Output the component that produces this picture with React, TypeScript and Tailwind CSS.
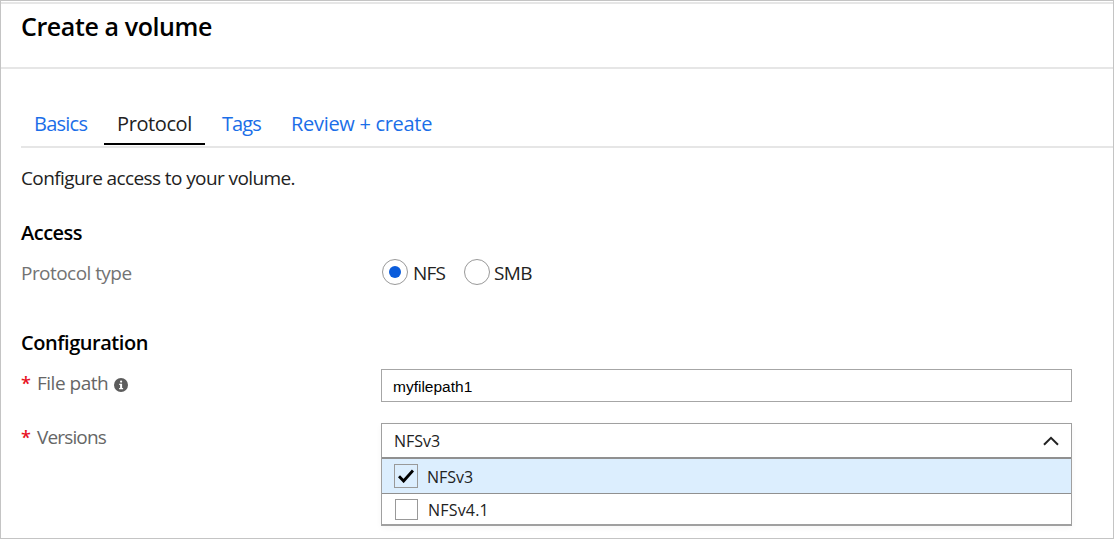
import React, { useState } from "react";

const tabs = [
  { name: "Basics", box: "w-[83px] pl-[13px]", text: "tracking-[-0.75px]" },
  { name: "Protocol", box: "w-[101px] pl-[13px]", text: "tracking-[-0.4px]" },
  { name: "Tags", box: "w-[70px] pl-[17px]", text: "tracking-[-0.9px]" },
  { name: "Review + create", box: "pl-[16px]", text: "tracking-[-0.3px]" },
];

function Radio({ checked, onSelect }: { checked: boolean; onSelect: () => void }) {
  return (
    <button
      type="button"
      role="radio"
      aria-checked={checked}
      onClick={onSelect}
      className="flex size-[26px] shrink-0 items-center justify-center rounded-full border-[1.5px] border-[#999] bg-white"
    >
      {checked && <span className="size-[12px] rounded-full bg-[#0a5cdb]" />}
    </button>
  );
}

function InfoIcon() {
  return (
    <svg viewBox="0 0 14 14" className="ml-[6px] size-[14px]">
      <circle cx="7" cy="7" r="7" fill="#5c5c5c" />
      <path d="M5.2 5.8h2.9v4.3h1v1.1H5.1v-1.1h1V6.9h-.9z" fill="#fff" />
      <circle cx="7.1" cy="3.6" r="1.1" fill="#fff" />
    </svg>
  );
}

function Required() {
  return <span className="w-[16px] text-[18px] font-semibold text-[#e81123]">*</span>;
}

export default function App() {
  const [tab, setTab] = useState("Protocol");
  const [protocol, setProtocol] = useState("NFS");

  return (
    <div className="h-[539px] w-[1114px] overflow-hidden border border-[#c4c4c4] bg-white font-['Open_Sans','Noto_Sans',sans-serif] text-[19px] leading-[28px] whitespace-nowrap text-[#222]">
      <header className="mt-px h-[67px] border-t-2 border-b-2 border-t-[#e6e6e6] border-b-[#e6e6e6] pt-[6px] pl-[20px]">
        <h1 className="text-[25px] leading-[32px] font-semibold tracking-[-0.4px] text-black">Create a volume</h1>
      </header>

      <nav className="ml-[20px] flex h-[79px] items-end border-b-2 border-[#e6e6e6]">
        {tabs.map((t) => (
          <button
            key={t.name}
            type="button"
            onClick={() => setTab(t.name)}
            className={`mb-px flex h-[35px] border-b-2 text-left text-[20px] leading-[28px] ${t.box} ${
              tab === t.name ? "border-black text-[#222]" : "border-transparent text-[#1b6ee8]"
            }`}
          >
            <span className={t.text}>{t.name}</span>
          </button>
        ))}
      </nav>

      <main className="pt-[16px] pl-[20px]">
        <p className="h-[54px] tracking-[-0.6px]">Configure access to your volume.</p>
        <h2 className="h-[40px] pt-px text-[20px] font-semibold tracking-[-0.5px] text-black">Access</h2>
        <div className="flex h-[70px]">
          <span className="w-[361px] pt-px tracking-[-0.55px] text-[#737373]">Protocol type</span>
          <div role="radiogroup" className="flex h-[28px] items-center">
            <Radio checked={protocol === "NFS"} onSelect={() => setProtocol("NFS")} />
            <span className="w-[51px] pl-[5px] pt-px tracking-[-0.8px]">NFS</span>
            <span className="flex w-[31px] pl-[5px]">
              <Radio checked={protocol === "SMB"} onSelect={() => setProtocol("SMB")} />
            </span>
            <span className="pl-[4px] pt-px tracking-[-0.6px]">SMB</span>
          </div>
        </div>
        <h2 className="h-[41px] pt-px text-[20px] font-semibold tracking-[-0.45px] text-black">Configuration</h2>

        <div className="flex h-[54px]">
          <label className="flex w-[360px] text-[#666]">
            <Required />
            <span className="tracking-[-0.5px]">File path</span>
            <span className="mt-[9px]"><InfoIcon /></span>
          </label>
          <div className="flex h-[33px] w-[691px] items-center border-[1.5px] border-[#a6a6a6] pt-[2px] pl-[11px] font-['Liberation_Sans',sans-serif] text-[15.5px] text-black">
            myfilepath1
          </div>
        </div>

        <div className="flex">
          <label className="flex w-[360px] text-[#666]">
            <Required />
            <span className="tracking-[-0.85px]">Versions</span>
          </label>
          <div className="w-[691px] border border-b-2 border-[#a0a0a0] text-[16px] shadow-[0_2px_6px_rgba(0,0,0,0.04)]">
            <div className="flex h-[35px] items-center justify-between border-b-2 border-[#909090] pt-px pr-[12px] pl-[12px]">
              <span>NFSv3</span>
              <svg viewBox="0 0 16 10" className="h-[10px] w-[16px]" fill="none" stroke="#222" strokeWidth="2">
                <path d="M1 8.8 8 1.8 15 8.8" />
              </svg>
            </div>
            <div className="flex h-[35px] items-center border-b border-[#909090] bg-[#dceefe] pl-[12px]">
              <span className="flex size-[24px] items-center justify-center border-[1.5px] border-[#999]">
                <svg viewBox="0 0 16 14" className="h-[14px] w-[16px]" fill="none" stroke="#000" strokeWidth="2.9">
                  <path d="M1 7.3 5.6 12 15 1.5" />
                </svg>
              </span>
              <span className="pl-[9px] pt-[2px]">NFSv3</span>
            </div>
            <div className="flex h-[30px] items-center pt-px pl-[13px]">
              <span className="h-[21px] w-[23px] border-[1.5px] border-[#999]" />
              <span className="pl-[10px] tracking-[0.2px]">NFSv4.1</span>
            </div>
          </div>
        </div>
      </main>
    </div>
  );
}
